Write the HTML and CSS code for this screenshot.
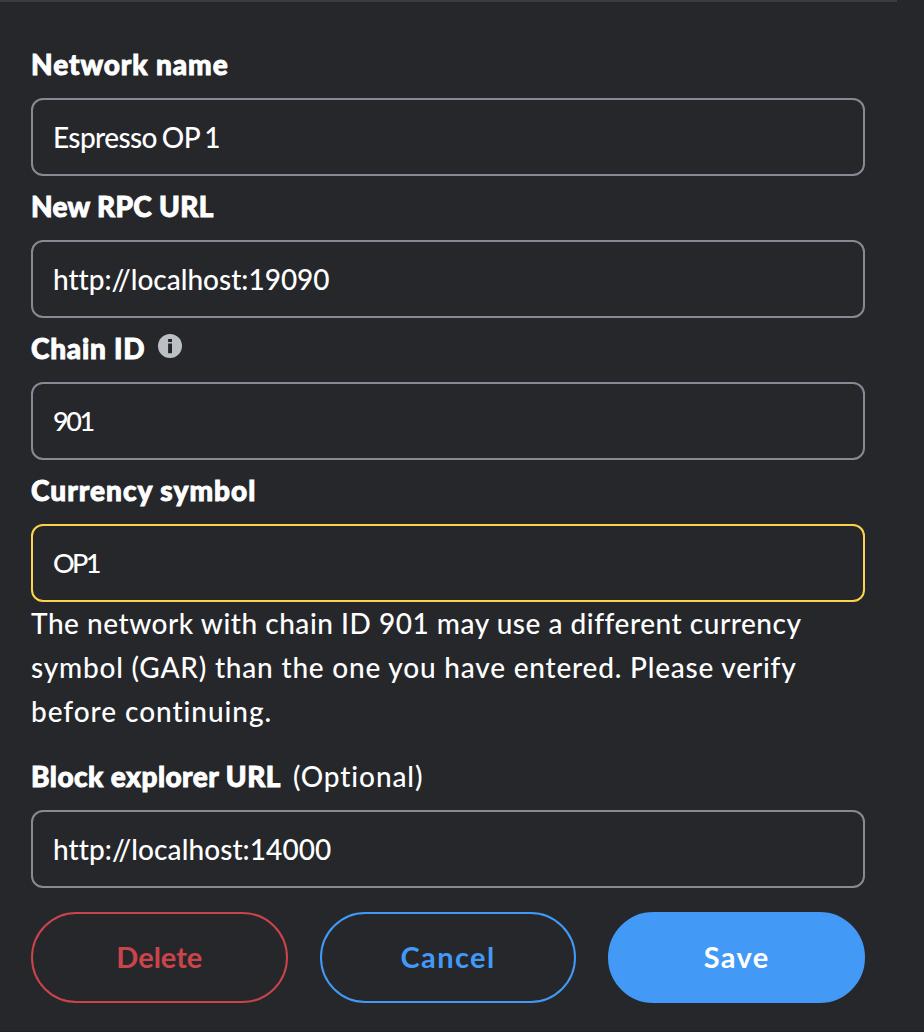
FILE: index.html
```html
<!DOCTYPE html>
<html lang="en">
<head>
<meta charset="utf-8">
<title>Network settings</title>
<link rel="stylesheet" href="styles.css">
</head>
<body>
<main class="panel">
  <div class="divider"></div>
  <form class="form">
    <div class="label"><span class="name t-network">Network name</span></div>
    <div class="field"><span class="v-espresso">Espresso OP 1</span></div>
    <div class="label"><span class="name t-rpc">New RPC URL</span></div>
    <div class="field"><span class="v-rpc">http://localhost:19090</span></div>
    <div class="label"><span class="name t-chain">Chain ID</span>
      <svg class="info" viewBox="0 0 24 24"><circle cx="12" cy="12" r="12" fill="#bbc0c5"/><path d="M10.1 9.5h3.9v9.7h-3.9zM10.1 4.9h3.9v3.2h-3.9z" fill="#24272a"/></svg>
    </div>
    <div class="field"><span class="v-chain">901</span></div>
    <div class="label"><span class="name t-currency">Currency symbol</span></div>
    <div class="field warning"><span class="v-symbol">OP1</span></div>
    <p class="message"><span class="m-1">The network with chain ID 901 may use a different currency</span><br><span class="m-2">symbol (GAR) than the one you have entered. Please verify</span><br><span class="m-3">before continuing.</span></p>
    <div class="label explorer"><span class="name t-explorer">Block explorer URL</span><span class="optional">(Optional)</span></div>
    <div class="field"><span class="v-explorer">http://localhost:14000</span></div>
    <div class="actions">
      <button type="button" class="btn delete">Delete</button>
      <button type="button" class="btn cancel">Cancel</button>
      <button type="button" class="btn save">Save</button>
    </div>
  </form>
</main>
</body>
</html>
```
FILE: styles.css
```css
* { box-sizing: border-box; }
body { margin: 0; background: #26272b; }
.panel {
  height: 1032px;
  overflow: hidden;
  color: #fff;
  font: 500 28px/44px Lato, "Liberation Sans", sans-serif;
  font-variant-ligatures: none;
  border-bottom: 1px solid #202024;
}
.divider { width: 897px; height: 2px; background: #3b3d42; }
.form { width: 834px; margin: 40px 0 0 31px; }
.label { display: flex; align-items: center; height: 56px; padding-bottom: 13px; white-space: nowrap; }
.field + .label { height: 64px; padding: 8px 0 13px; }
.name { font-weight: 900; -webkit-text-stroke: 0.9px currentColor; }
.t-network { letter-spacing: 0.92px; }
.t-rpc { letter-spacing: 0.3px; }
.t-chain { letter-spacing: 0.75px; }
.t-currency { letter-spacing: 1.02px; }
.t-explorer { letter-spacing: 0.46px; }
.info { width: 24px; height: 24px; margin: -3px 0 0 13px; }
.field {
  display: flex;
  align-items: center;
  height: 78px;
  padding: 0 20px;
  border: 2px solid #858b95;
  border-radius: 12px;
  white-space: nowrap;
}
.v-espresso { letter-spacing: -0.6px; word-spacing: -1.5px; }
.v-chain { font-size: 27px; letter-spacing: -2.4px; }
.v-symbol { font-size: 27px; letter-spacing: -2.6px; }
.v-explorer { letter-spacing: 0.08px; }
.warning { border-color: #fcd34d; }
.message { margin: -1px 0 1px; height: 140px; white-space: nowrap; }
.m-1 { letter-spacing: 0.53px; }
.m-2 { letter-spacing: 0.8px; }
.m-3 { letter-spacing: 0.95px; }
.explorer { height: 68px; padding: 12px 0 13px; }
.optional { margin-left: 12px; letter-spacing: 0.9px; }
.actions { display: grid; grid-template-columns: repeat(3, 1fr); gap: 32px; margin-top: 24px; }
.btn {
  height: 91px;
  padding: 0 0 2px;
  border: 2px solid;
  border-radius: 46px;
  background: transparent;
  font: 700 29px/44px Lato, "Liberation Sans", sans-serif;
}
.delete { color: #ca444a; border-color: #ca444a; }
.cancel { color: #4299f6; border-color: #4299f6; letter-spacing: 1.4px; }
.save { color: #fff; border-color: #4299f6; background: #4299f6; letter-spacing: 1.4px; }
```
